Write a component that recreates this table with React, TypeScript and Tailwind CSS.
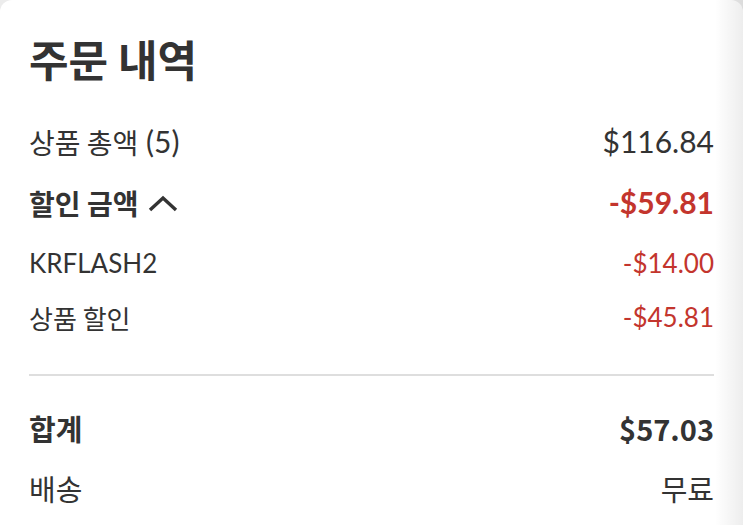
const LATO = { fontFamily: 'Lato, "Noto Sans CJK KR", sans-serif' };
const KR = { fontFamily: '"Noto Sans CJK KR", "Noto Sans", sans-serif' };

function Kr({ children, size = "text-[28px]" }: { children: React.ReactNode; size?: string }) {
  return (
    <span className={size} style={KR}>
      {children}
    </span>
  );
}

function Row({
  label,
  value,
  bold = false,
  red = false,
  h,
  size = "text-[30px]",
}: {
  label: React.ReactNode;
  value: React.ReactNode;
  bold?: boolean;
  red?: boolean;
  h: string;
  size?: string;
}) {
  return (
    <div className={`flex items-center justify-between ${h} ${size}`}>
      <div className={`flex items-center text-[#333] ${bold ? "font-bold" : ""}`}>{label}</div>
      <div className={`${bold ? "font-bold" : ""} ${red ? "text-[#c3352d]" : "text-[#333]"}`}>{value}</div>
    </div>
  );
}

export default function App() {
  return (
    <div className="w-[743px] h-[525px] bg-[#ececec] overflow-hidden" style={LATO}>
      <div className="relative h-full bg-white rounded-t-xl px-[29px] pt-[32px]">
        <h1 className="text-[43px] leading-[52px] font-bold text-[#333]" style={KR}>
          주문 내역
        </h1>

        <div className="mt-[27px] flex flex-col">
          <Row
            h="h-[61px]"
            label={
              <>
                <Kr>상품 총액</Kr>
                <span>&nbsp;(5)</span>
              </>
            }
            value="$116.84"
          />
          <Row
            h="h-[61px]"
            bold
            red
            label={
              <>
                <Kr>할인 금액</Kr>
                <svg className="ml-[10px]" width="30" height="18" viewBox="0 0 30 18" fill="none">
                  <polyline points="2,16 15,4 28,16" stroke="#333" strokeWidth="3.4" />
                </svg>
              </>
            }
            value="-$59.81"
          />
          <Row h="h-[61px]" red size="text-[26px]" label="KRFLASH2" value="-$14.00" />
          <Row h="h-[46px]" red size="text-[26px]" label={<Kr size="text-[26px]">상품 할인</Kr>} value="-$45.81" />
        </div>

        <div className="mt-[34px] h-[2px] bg-[#dedede]" />

        <div className="mt-[23px] flex flex-col" style={KR}>
          <Row h="h-[60px]" bold size="text-[29px]" label="합계" value="$57.03" />
          <Row h="h-[60px]" size="text-[29px]" label="배송" value="무료" />
        </div>

        <div className="pointer-events-none absolute top-0 right-0 h-full w-[28px] bg-gradient-to-r from-transparent to-black/[0.07]" />
      </div>
    </div>
  );
}
